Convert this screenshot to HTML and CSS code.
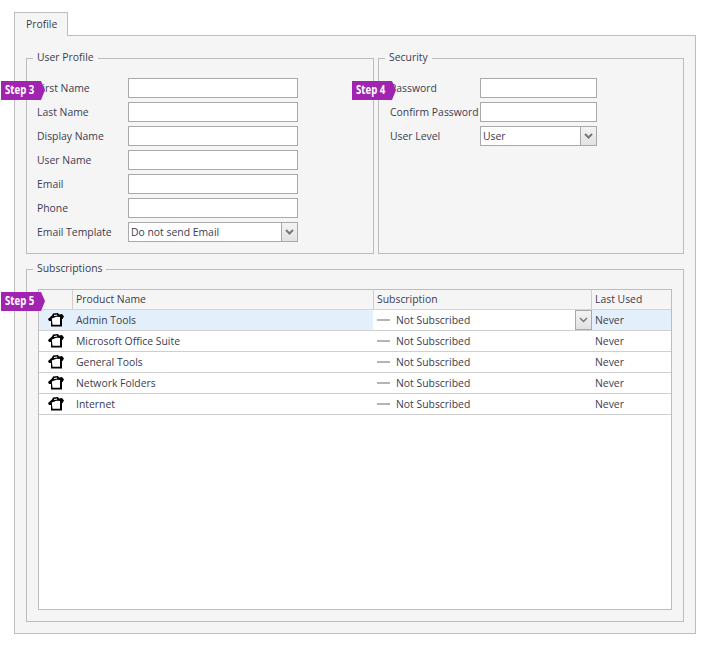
FILE: index.html
```html
<!DOCTYPE html>
<html lang="en">
<head>
<meta charset="utf-8">
<title>Profile</title>
<link rel="stylesheet" href="styles.css">
</head>
<body>
<svg class="defs" width="0" height="0" aria-hidden="true">
  <symbol id="box" viewBox="0 0 16 14">
    <path d="M0 6 L4 2.5 L5 .5 L10 0 L11 1.5 L14 1 L16 3.5 L14.5 6 L14 6 L14 13.5 L3 13.5 L3 8 L1 8 Z" fill="#000"/>
    <path d="M3.8 5.5 L8.5 3.8 L12 4 L12 11.8 L4.5 11.8 Z" fill="#fff"/>
    <path d="M6 2 L9 1.6 L9.4 2.6 L6 3 Z" fill="#fff"/>
  </symbol>
</svg>
<div class="tabs"><div class="tab">Profile</div></div>
<main class="panel">
  <div class="top">
    <fieldset class="group profile">
      <legend>User Profile</legend>
      <div class="form profile-form">
        <label>First Name</label><div class="input"></div>
        <label>Last Name</label><div class="input"></div>
        <label>Display Name</label><div class="input"></div>
        <label>User Name</label><div class="input"></div>
        <label>Email</label><div class="input"></div>
        <label>Phone</label><div class="input"></div>
        <label>Email Template</label>
        <div class="input select"><span class="value">Do not send Email</span><span class="drop"><svg width="9" height="6" viewBox="0 0 9 6"><path d="M1 1 L4.5 4.5 L8 1" fill="none" stroke="#777" stroke-width="2"/></svg></span></div>
      </div>
      <div class="badge badge-3"><span>Step 3</span></div>
    </fieldset>
    <fieldset class="group security">
      <legend>Security</legend>
      <div class="form security-form">
        <label>Password</label><div class="input"></div>
        <label>Confirm Password</label><div class="input"></div>
        <label>User Level</label>
        <div class="input select"><span class="value">User</span><span class="drop"><svg width="9" height="6" viewBox="0 0 9 6"><path d="M1 1 L4.5 4.5 L8 1" fill="none" stroke="#777" stroke-width="2"/></svg></span></div>
      </div>
      <div class="badge badge-4"><span>Step 4</span></div>
    </fieldset>
  </div>
  <fieldset class="group subs">
    <legend>Subscriptions</legend>
    <div class="grid">
      <div class="row head">
        <div class="cell"></div>
        <div class="cell">Product Name</div>
        <div class="cell">Subscription</div>
        <div class="cell">Last Used</div>
      </div>
      <div class="row active">
        <div class="cell ico"><svg width="16" height="14"><use href="#box"/></svg></div>
        <div class="cell">Admin Tools</div>
        <div class="cell sub"><span class="dash"></span>Not Subscribed<span class="cell-drop"><svg width="9" height="6" viewBox="0 0 9 6"><path d="M1 1 L4.5 4.5 L8 1" fill="none" stroke="#777" stroke-width="1.5"/></svg></span></div>
        <div class="cell">Never</div>
      </div>
      <div class="row">
        <div class="cell ico"><svg width="16" height="14"><use href="#box"/></svg></div>
        <div class="cell">Microsoft Office Suite</div>
        <div class="cell sub"><span class="dash"></span>Not Subscribed</div>
        <div class="cell">Never</div>
      </div>
      <div class="row">
        <div class="cell ico"><svg width="16" height="14"><use href="#box"/></svg></div>
        <div class="cell">General Tools</div>
        <div class="cell sub"><span class="dash"></span>Not Subscribed</div>
        <div class="cell">Never</div>
      </div>
      <div class="row">
        <div class="cell ico"><svg width="16" height="14"><use href="#box"/></svg></div>
        <div class="cell">Network Folders</div>
        <div class="cell sub"><span class="dash"></span>Not Subscribed</div>
        <div class="cell">Never</div>
      </div>
      <div class="row">
        <div class="cell ico"><svg width="16" height="14"><use href="#box"/></svg></div>
        <div class="cell">Internet</div>
        <div class="cell sub"><span class="dash"></span>Not Subscribed</div>
        <div class="cell">Never</div>
      </div>
    </div>
    <div class="badge badge-5"><span>Step 5</span></div>
  </fieldset>
</main>
</body>
</html>
```
FILE: styles.css
```css
* { box-sizing: border-box; }
html, body { margin: 0; padding: 0; }
body {
  width: 708px;
  height: 646px;
  padding: 12px 12px 0 14px;
  background: #fff;
  font: 10.4px/15px "Open Sans", "Noto Sans", sans-serif;
  color: #3c3c50;
  overflow: hidden;
}
.defs { position: absolute; }
.tabs { display: flex; height: 24px; margin-bottom: -1px; position: relative; }
.tab {
  width: 54px;
  height: 24px;
  padding: 4px 0 0 11px;
  background: #f5f5f5;
  border: 1px solid #bdbdbd;
  border-bottom: 0;
}
.panel {
  width: 682px;
  height: 599px;
  padding: 15px 11px 11px;
  background: #f5f5f5;
  border: 1px solid #bdbdbd;
}
.top { display: flex; gap: 4px; margin-bottom: 8px; height: 203px; }
.group {
  position: relative;
  margin: 0;
  min-width: 0;
  padding: 0 10px;
  border: 1px solid #bdbdbd;
}
.group legend {
  margin-left: -4px;
  padding: 0 4px 2px;
  line-height: 13px;
}
.profile { width: 348px; }
.security { width: 306px; padding-left: 11px; }
.security legend { margin-left: -5px; }
.subs { height: 360px; padding: 0 11px; }
.subs legend { margin-left: -5px; }
.form {
  display: grid;
  row-gap: 4px;
  grid-auto-rows: 20px;
  margin-top: 12px;
  align-items: center;
}
.form label { white-space: nowrap; }
.profile-form { grid-template-columns: 91px 170px; }
.security-form { grid-template-columns: 90px 117px; }
.input {
  display: flex;
  height: 20px;
  background: #fff;
  border: 1px solid #a9a9a9;
}
.select .value { flex: 1; padding: 2px 2px 0; }
.drop {
  width: 16px;
  display: flex;
  align-items: center;
  justify-content: center;
  background: linear-gradient(#f3f3f3, #e2e2e2);
  border-left: 1px solid #a9a9a9;
}
.grid {
  height: 321px;
  margin-top: 12px;
  background: #fff;
  border: 1px solid #bdbdbd;
}
.row {
  display: grid;
  grid-template-columns: 33px 301px 218px 80px;
  grid-template-rows: 20px;
  height: 21px;
  border-bottom: 1px solid #cfcfcf;
}
.row.head { height: 20px; grid-template-rows: 19px; background: #f5f5f5; border-bottom-color: #d4d4d4; }
.row.active { background: #e3effa; }
.cell {
  padding: 3px 4px 0;
  white-space: nowrap;
}
.head .cell { padding-top: 2px; }
.head .cell + .cell { border-left: 1px solid #cfcfcf; padding-left: 3px; }
.cell.ico { padding: 3px 0 0 9px; }
.cell.sub {
  display: flex;
  align-items: center;
  padding: 0 0 0 4px;
  background: #fff;
  position: relative;
}
.dash {
  width: 13px;
  height: 2px;
  margin-right: 6px;
  background: #b4b4b4;
}
.cell-drop {
  position: absolute;
  right: -1px;
  top: 0;
  width: 17px;
  height: 20px;
  display: flex;
  align-items: center;
  justify-content: center;
  background: linear-gradient(#f3f3f3, #e2e2e2);
  border: 1px solid #a9a9a9;
}
.badge {
  position: absolute;
  top: 15px;
  left: -26px;
  width: 44px;
  height: 19px;
  padding-left: 4px;
  background: #a124b1;
  color: #fff;
  font: bold 12px/18px "Open Sans", sans-serif;
  clip-path: polygon(0 0, 40px 0, 44px 9px, 40px 19px, 0 19px);
}
.badge span { display: inline-block; transform: scaleX(.8); transform-origin: left center; white-space: nowrap; }
.badge-4 { left: -27px; }
```
